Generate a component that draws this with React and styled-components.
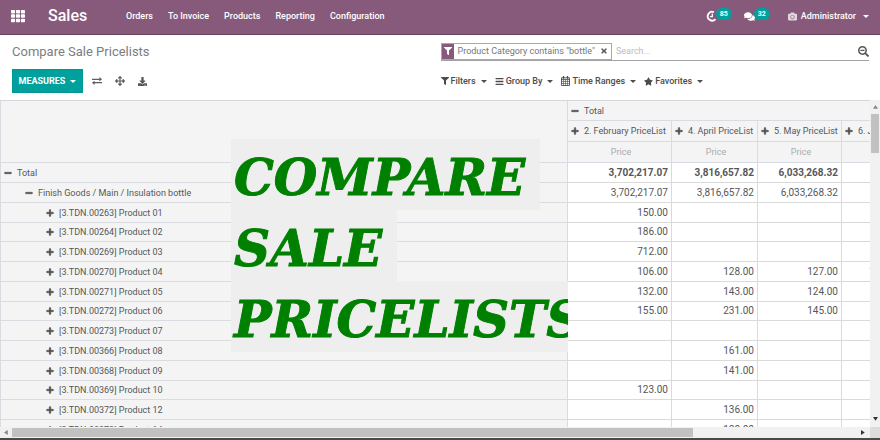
import React from "react";
import styled, { createGlobalStyle } from "styled-components";
import {
  FaTh, FaComments, FaCamera, FaFilter, FaTimes, FaSearchMinus, FaBars,
  FaStar, FaArrowsAlt, FaDownload, FaPlus, FaMinus,
} from "react-icons/fa";

const GlobalStyle = createGlobalStyle`
  *, *::before, *::after { box-sizing: border-box; }
  body { margin: 0; background: #fff; overflow: hidden; }
  button, input { font: inherit; color: inherit; margin: 0; padding: 0; border: 0; background: none; }
  svg { display: block; flex: none; }
`;

const Page = styled.div`
  height: 100vh;
  display: flex;
  flex-direction: column;
  font: 9px/14px Roboto, sans-serif;
  color: #55575a;
`;

const Navbar = styled.nav`
  height: 35px;
  flex: none;
  display: flex;
  align-items: center;
  padding: 0 11px 2px;
  background: #875a7b;
  border-bottom: 1px solid #68465f;
  color: #fff;
  a { color: inherit; text-decoration: none; }
`;
const IconButton = styled.button`
  display: inline-flex;
  align-items: center;
  justify-content: center;
  font-size: ${(p) => p.$size || 10}px;
`;
const Brand = styled.a`
  font-size: 16px;
  line-height: 20px;
  font-weight: 500;
  width: 78px;
  margin-left: 23px;
`;
const Menu = styled.div`
  display: flex;
  gap: 15px;
  flex: 1;
  font-weight: 500;
`;
const Systray = styled.div`
  display: flex;
  align-items: center;
`;
const Notice = styled.button`
  display: flex;
  align-items: center;
  width: 38px;
  font-size: 11px;
`;
const Count = styled.span`
  margin: -5px 0 0 -1px;
  padding: 0 4px;
  border-radius: 6px;
  background: #00a09d;
  font-size: 7px;
  line-height: 12px;
  font-weight: 700;
`;
const User = styled.button`
  display: flex;
  align-items: center;
  gap: 4px;
  margin-left: 6px;
  font-weight: 500;
  svg { opacity: 0.75; }
`;
const Caret = styled.span`
  border: 3px solid transparent;
  border-top-color: currentColor;
  border-bottom: 0;
  margin-left: 3px;
`;

const ControlPanel = styled.header`
  flex: none;
  height: 65px;
  padding: 7px 11px 7px 12px;
  display: grid;
  grid-template-columns: 1fr 1fr;
  grid-template-rows: 19px 24px;
  row-gap: 8px;
  align-items: center;
`;
const Title = styled.h1`
  margin: 0;
  font-size: 13px;
  line-height: 18px;
  font-weight: 400;
  color: #7b7d80;
`;
const Search = styled.div`
  display: flex;
  align-items: center;
  height: 18px;
  border-bottom: 1px solid #a2a2a4;
  input { flex: 1; min-width: 0; padding-left: 4px; outline: 0; }
  input::placeholder { color: #bcbcbc; opacity: 1; }
`;
const Facet = styled.div`
  display: flex;
  align-items: center;
  height: 17px;
  border: 1px solid #a9a9ad;
  color: #74777a;
`;
const FacetIcon = styled.span`
  align-self: stretch;
  display: flex;
  align-items: center;
  padding: 0 2px;
  margin-right: 4px;
  background: #875a7b;
  color: #fff;
  font-size: 8px;
`;
const FacetClose = styled(IconButton)`
  margin: 0 3px 0 5px;
  color: #555;
`;
const Tools = styled.div`
  display: flex;
  align-items: center;
  gap: 9px;
`;
const Actions = styled.div`
  display: flex;
  align-items: center;
  gap: 13px;
`;
const Measures = styled.button`
  && {
    display: flex;
    align-items: center;
    justify-content: center;
    gap: 2px;
    height: 24px;
    width: 71px;
    background: #00a09d;
    border: 1px solid #009794;
    color: #fff;
    font-weight: 700;
  }
`;
const Filters = styled.div`
  display: flex;
  gap: 8px;
`;
const FilterButton = styled.button`
  display: flex;
  align-items: center;
  gap: 2px;
  font-weight: 500;
  color: #4c4c4c;
  white-space: nowrap;
`;

const PivotArea = styled.main`
  flex: 1;
  min-height: 0;
  display: grid;
  grid-template: minmax(0, 1fr) 11px / minmax(0, 1fr) 10px;
  border-bottom: 2px solid #4a4a4a;
`;
const Viewport = styled.div`
  position: relative;
  overflow: hidden;
  border-top: 1px solid #d5d7dc;
`;
const Pivot = styled.table`
  width: 100%;
  table-layout: fixed;
  border-collapse: separate;
  border-spacing: 0;
  tbody tr { height: 20px; }
  tbody tr:nth-child(4n) { height: 19px; }
`;
const Col = styled.col`
  width: ${(p) => p.$width};
`;
const Corner = styled.td`
  background: #f4f4f4;
  border: solid #dadce1;
  border-width: 0 1px 1px 1px;
`;
const HeadCell = styled.th`
  height: ${(p) => p.$height || 20}px;
  padding: 0 0 0 3px;
  background: #f4f4f4;
  border: solid #d9dbe3;
  border-width: 0 ${(p) => (p.$last ? 0 : 1)}px 1px 0;
  font-weight: 400;
  text-align: left;
  white-space: nowrap;
  overflow: hidden;
`;
const MeasureCell = styled(HeadCell)`
  text-align: center;
  color: #a8abb1;
`;
const Toggle = styled.button`
  display: flex;
  align-items: center;
  gap: 5px;
  width: 100%;
  text-align: left;
  white-space: nowrap;
  svg { font-size: 8px; color: #4c4c4c; stroke: currentColor; stroke-width: 30px; }
`;
const RowHead = styled.th`
  padding: 0 0 0 ${(p) => 3 + p.$level * 21}px;
  background: #f4f4f4;
  border: solid #dadce1;
  border-width: 0 1px 1px 1px;
  font-weight: 400;
`;
const Value = styled.td`
  padding: 0 3px 0 ${(p) => (p.$last ? 27 : 0)}px;
  border: solid #dadada;
  border-width: 0 ${(p) => (p.$last ? 0 : 1)}px 1px 0;
  text-align: ${(p) => (p.$last ? "left" : "right")};
  font-size: 10px;
  font-weight: ${(p) => (p.$bold ? 700 : 400)};
  white-space: nowrap;
  overflow: hidden;
`;
const Banner = styled.div`
  position: absolute;
  top: 38px;
  left: 231px;
  right: 302px;
  overflow: hidden;
  color: #008000;
  font: italic 700 50px/71px "DejaVu Serif", serif;
  -webkit-text-stroke: 1px #008000;
  white-space: nowrap;
`;
const BannerLine = styled.span`
  display: block;
  width: fit-content;
  padding: 6px ${(p) => (p.$flush ? 0 : 15)}px 0 3px;
  line-height: 65px;
  background: #eee;
`;

const TrackV = styled.div`
  display: flex;
  flex-direction: column;
  align-items: center;
  justify-content: space-between;
  padding: 5px 0;
  background: #f1f1f1;
`;
const ThumbV = styled.div`
  width: 8px;
  height: 39px;
  margin: 4px 0 auto;
  background: #c1c1c1;
`;
const TrackH = styled.div`
  display: flex;
  align-items: center;
  padding: 0 4px;
  background: #f1f1f1;
`;
const ThumbH = styled.div`
  width: 79%;
  height: 9px;
  margin: 0 auto 0 3px;
  background: #c1c1c1;
`;
const ScrollCorner = styled.div`
  background: #dcdcdc;
`;

const ARROWS = { up: "M0 3 2 0l2 3z", down: "M0 0h4L2 3z", left: "M3 0v4L0 2z", right: "M0 0v4l3-2z" };
const Arrow = ({ dir }) => (
  <svg width="5" height="5" viewBox="0 0 4 4" fill={dir === "up" || dir === "left" ? "#888" : "#333"}>
    <path d={ARROWS[dir]} />
  </svg>
);
const ClockIcon = () => (
  <svg width="11" height="12" viewBox="0 0 11 12" fill="none" stroke="#fff" strokeWidth="1.8">
    <path d="M9.5 9.1A4.4 4.4 0 1 1 8 2.2" />
    <path d="M6.3 3.6v3H4" strokeWidth="1.3" />
  </svg>
);
const SwapIcon = () => (
  <svg width="10" height="8" viewBox="0 0 10 8" fill="#5c5e60">
    <path d="M0 1.7h7.4V0L10 2.3 7.4 4.5V3H0zM10 5H2.6V3.7L0 5.7 2.6 8V6.3H10z" />
  </svg>
);
const CalendarIcon = () => (
  <svg width="9" height="10" viewBox="0 0 9 10" fill="none" stroke="#4c4c4c">
    <path d="M.5 1.8h8v7.7h-8zM.5 3.6h8" strokeWidth=".9" />
    <path d="M.5 5.5h8M.5 7.5h8M2.5 3.6v6M4.5 3.6v6M6.5 3.6v6" strokeWidth=".6" />
    <path d="M2.5 0v2.7M6.5 0v2.7" strokeWidth="1.3" />
  </svg>
);

const MENU = ["Orders", "To Invoice", "Products", "Reporting", "Configuration"];
const FILTERS = [
  ["Filters", <FaFilter size={8} />],
  ["Group By", <FaBars size={9} />],
  ["Time Ranges", <CalendarIcon />],
  ["Favorites", <FaStar size={9} />],
];
const PRICELISTS = ["2. February PriceList", "4. April PriceList", "5. May PriceList", "6. June PriceList"];
const TOTALS = ["3,702,217.07", "3,816,657.82", "6,033,268.32", ""];
const ROWS = [
  { label: "Total", level: 0, open: true, bold: true, values: TOTALS },
  { label: "Finish Goods / Main / Insulation bottle", level: 1, open: true, values: TOTALS },
  ...[
    ["[3.TDN.00263] Product 01", "150.00", "", "", ""],
    ["[3.TDN.00264] Product 02", "186.00", "", "", ""],
    ["[3.TDN.00269] Product 03", "712.00", "", "", ""],
    ["[3.TDN.00270] Product 04", "106.00", "128.00", "127.00", "127.00"],
    ["[3.TDN.00271] Product 05", "132.00", "143.00", "124.00", ""],
    ["[3.TDN.00272] Product 06", "155.00", "231.00", "145.00", ""],
    ["[3.TDN.00273] Product 07", "", "", "", ""],
    ["[3.TDN.00366] Product 08", "", "161.00", "", ""],
    ["[3.TDN.00368] Product 09", "", "141.00", "", ""],
    ["[3.TDN.00369] Product 10", "123.00", "", "", ""],
    ["[3.TDN.00372] Product 12", "", "136.00", "", ""],
    ["[3.TDN.00373] Product 14", "", "180.00", "", ""],
  ].map(([label, ...values]) => ({ label, level: 2, values })),
];

export default function App() {
  return (
    <Page>
      <GlobalStyle />
      <Navbar>
        <IconButton $size={14} aria-label="Applications"><FaTh /></IconButton>
        <Brand href="#">Sales</Brand>
        <Menu>{MENU.map((m) => <a key={m} href="#">{m}</a>)}</Menu>
        <Systray>
          <Notice aria-label="Activities"><ClockIcon /><Count>85</Count></Notice>
          <Notice aria-label="Messages"><FaComments /><Count>32</Count></Notice>
          <User><FaCamera size={9} />Administrator<Caret /></User>
        </Systray>
      </Navbar>

      <ControlPanel>
        <Title>Compare Sale Pricelists</Title>
        <Search>
          <Facet>
            <FacetIcon><FaFilter /></FacetIcon>
            Product Category contains "bottle"
            <FacetClose $size={8} aria-label="Remove filter"><FaTimes /></FacetClose>
          </Facet>
          <input type="text" placeholder="Search..." aria-label="Search" />
          <IconButton $size={11} aria-label="Search options"><FaSearchMinus /></IconButton>
        </Search>
        <Tools>
          <Measures>MEASURES<Caret /></Measures>
          <Actions>
            <IconButton aria-label="Flip axis"><SwapIcon /></IconButton>
            <IconButton aria-label="Expand all"><FaArrowsAlt /></IconButton>
            <IconButton $size={9} aria-label="Download"><FaDownload /></IconButton>
          </Actions>
        </Tools>
        <Filters>
          {FILTERS.map(([label, icon]) => (
            <FilterButton key={label}>{icon}{label}<Caret /></FilterButton>
          ))}
        </Filters>
      </ControlPanel>

      <PivotArea>
        <Viewport>
          <Pivot>
            <colgroup>
              <Col $width="auto" /><Col $width="104px" /><Col $width="86px" /><Col $width="84px" /><Col $width="28px" />
            </colgroup>
            <thead>
              <tr>
                <Corner rowSpan={3} />
                <HeadCell colSpan={4} $last><Toggle><FaMinus />Total</Toggle></HeadCell>
              </tr>
              <tr>
                {PRICELISTS.map((p, i) => (
                  <HeadCell key={p} $last={i === 3} $height={21}><Toggle><FaPlus />{p}</Toggle></HeadCell>
                ))}
              </tr>
              <tr>
                {PRICELISTS.map((p, i) => (
                  <MeasureCell key={p} $last={i === 3} $height={21}>{i < 3 ? "Price" : ""}</MeasureCell>
                ))}
              </tr>
            </thead>
            <tbody>
              {ROWS.map((row) => (
                <tr key={row.label}>
                  <RowHead scope="row" $level={row.level}>
                    <Toggle>{row.open ? <FaMinus /> : <FaPlus />}{row.label}</Toggle>
                  </RowHead>
                  {row.values.map((v, i) => (
                    <Value key={i} $bold={row.bold} $last={i === 3}>{v}</Value>
                  ))}
                </tr>
              ))}
            </tbody>
          </Pivot>
          <Banner>
            <BannerLine>COMPARE</BannerLine>
            <BannerLine>SALE</BannerLine>
            <BannerLine $flush>PRICELISTS</BannerLine>
          </Banner>
        </Viewport>
        <TrackV><Arrow dir="up" /><ThumbV /><Arrow dir="down" /></TrackV>
        <TrackH><Arrow dir="left" /><ThumbH /><Arrow dir="right" /></TrackH>
        <ScrollCorner />
      </PivotArea>
    </Page>
  );
}
